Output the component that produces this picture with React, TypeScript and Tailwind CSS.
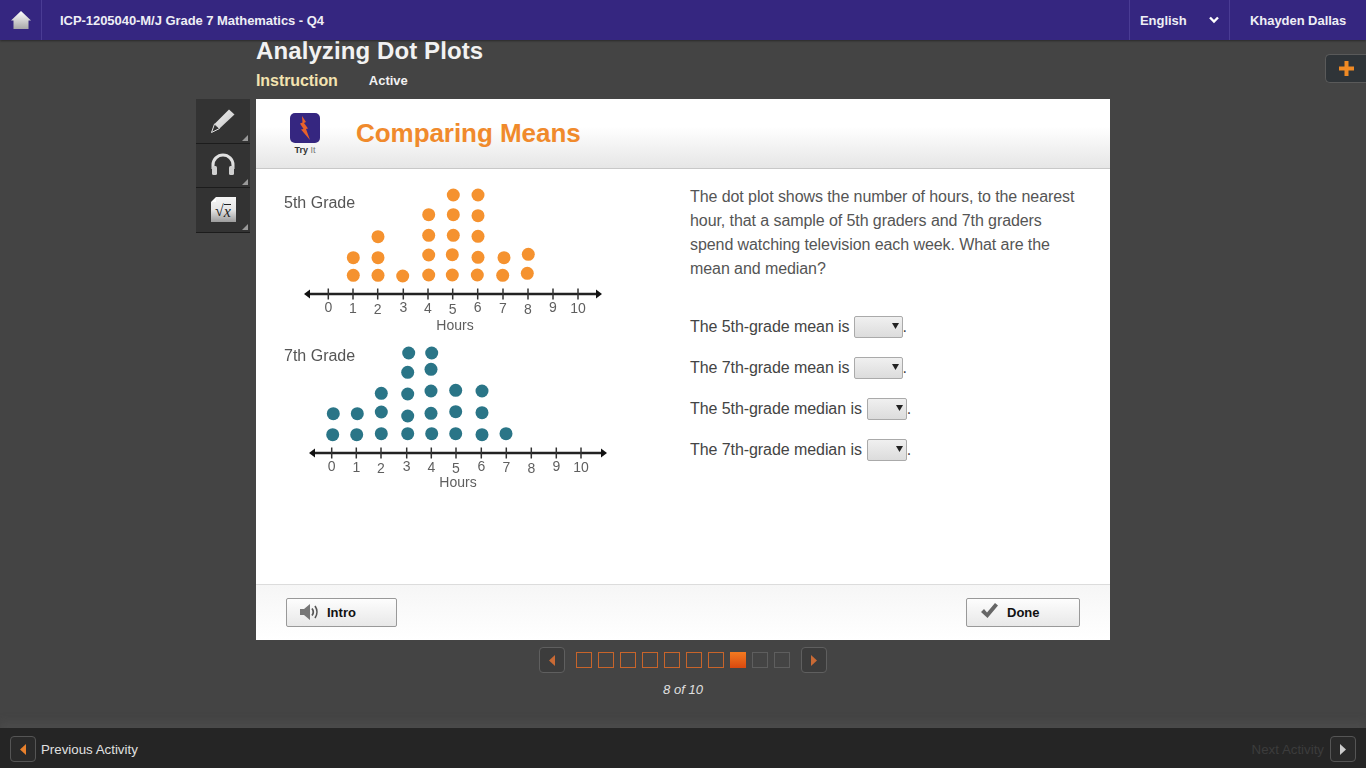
import React from "react";

const Q = ({ label, wide }: { label: string; wide?: boolean }) => (
  <div className="flex items-center h-[41px] text-[16px] tracking-[-0.07px] text-[#444]">
    <span>{label}</span>
    <div className={`relative h-[22px] rounded-[2px] border border-[#aaa] bg-gradient-to-b from-[#f0f0f0] to-[#dcdcdc] ${wide ? "w-[40px] ml-[5px]" : "w-[49px] ml-[4px]"}`}>
      <svg className="absolute right-[3px] top-[6px]" width="7" height="6" viewBox="0 0 7 6"><path d="M0 0h7L3.5 6z" fill="#222" /></svg>
    </div>
    <span>.</span>
  </div>
);

function Plot({ dots, color, y, x0, ticks, labelY, hoursX, hoursY, labels, title, titleY, xEnd }: { dots: number[][]; color: string; y: number; x0: number; xEnd: number; ticks: number[]; labelY: number; hoursX: number; hoursY: number; labels: number[]; title: string; titleY: number }) {
  return (
    <g>
      <text x="284" y={titleY} fontSize="16" fill="#555" textAnchor="start" dominantBaseline="middle" fontFamily="Liberation Sans, Arial, sans-serif">{title}</text>
      {dots.map((d, i) => <circle key={i} cx={d[0]} cy={d[1]} r="6.5" fill={color} />)}
      <line x1={x0 + 3} x2={xEnd - 3} y1={y} y2={y} stroke="#222" strokeWidth="2.4" />
      <path d={`M${x0} ${y}l6 -4.5v9z`} fill="#111" />
      <path d={`M${xEnd} ${y}l-6 -4.5v9z`} fill="#111" />
      {ticks.map((t, i) => (
        <g key={i}>
          <line x1={t} x2={t} y1={y - 5.5} y2={y + 5.5} stroke="#333" strokeWidth="1.5" />
          <text x={t} y={labelY + (i * 7 % 3 - 1)} fontSize="14" fill="#5f5f5f" textAnchor="middle" dominantBaseline="middle" fontFamily="Liberation Sans, Arial, sans-serif">{labels[i]}</text>
        </g>
      ))}
      <text x={hoursX} y={hoursY} fontSize="14" fill="#5f5f5f" textAnchor="middle" dominantBaseline="middle" fontFamily="Liberation Sans, Arial, sans-serif">Hours</text>
    </g>
  );
}

const d5 = [[353.3,257.7],[353.3,275.3],[378,236.7],[378,257.7],[378,275.3],[402.7,276],[428.7,214.7],[428.7,235.3],[428.7,255],[428.7,275],[453.3,195],[453.3,214.7],[453.3,235.3],[452.3,254.7],[452.3,275],[478,195],[478,215.7],[478,236.3],[478,257.3],[477.3,275],[504,257.7],[502.7,275.3],[528.3,254.3],[527.3,273.3]];
const d7 = [[333.3,413.7],[332.7,434.7],[357.3,413.7],[356.7,434.7],[381.3,393.3],[381.3,412],[381.3,433.7],[408.7,353],[407.7,372.3],[407.7,394],[407.7,416],[407.7,433.7],[431.7,353],[431,369.3],[431,391],[431,413.3],[431.7,433.7],[455.7,390.3],[455.7,411.7],[455.7,433.7],[482,391],[482,412.7],[482,434.7],[506,433.7]];
const nums = [0,1,2,3,4,5,6,7,8,9,10];

const Corner = () => <span className="absolute right-[2px] bottom-[2px] w-0 h-0 border-l-[6px] border-l-transparent border-b-[6px] border-b-[#999]" />;

const Tool = ({ children }: { children: React.ReactNode }) => (
  <div className="relative h-[44.500px] w-[54px] bg-[#333] border-b border-[#1c1c1c] flex items-center justify-center">
    {children}
    <Corner />
  </div>
);

const NavBtn = ({ dir, dark }: { dir: "l" | "r"; dark?: boolean }) => (
  <div className={`w-[26px] h-[26px] rounded-[4px] border ${dark ? "bg-[#2a2a2a] border-[#555]" : "bg-[#3c3c3c] border-[#5f5f5f]"} flex items-center justify-center`}>
    <svg width="6" height="11" viewBox="0 0 6 11"><path d={dir === "l" ? "M6 0v11L0 5.5z" : "M0 0v11l6-5.5z"} fill={dark ? "#e8802c" : "#c96a35"} /></svg>
  </div>
);

export default function App() {
  return (
    <div className="w-[1366px] h-[768px] overflow-hidden bg-[#444] flex flex-col relative" style={{ fontFamily: '"Liberation Sans", Arial, sans-serif' }}>
      <header className="h-[40px] bg-[#352680] flex items-center text-[13px] font-bold tracking-[-0.05px] text-[#eeeef5] shadow-[0_1px_2px_rgba(0,0,0,0.4)] z-10">
        <div className="w-[42px] h-full border-r border-[#4a3c94] flex items-center justify-center">
          <svg width="20" height="20" viewBox="0 0 20 20">
            <defs><linearGradient id="h" x1="0" y1="0" x2="0" y2="1"><stop offset="0" stopColor="#fff" /><stop offset="1" stopColor="#a8a8a8" /></linearGradient></defs>
            <path d="M10 1L20 10.5h-2.5V19h-15v-8.5H0z" fill="url(#h)" />
          </svg>
        </div>
        <div className="ml-[18px] flex-1 mt-[1px]">ICP-1205040-M/J Grade 7 Mathematics - Q4</div>
        <div className="w-[101px] h-full border-l border-r border-[#4a3c94] flex items-center justify-between pl-[10px] pr-[10px]">
          <span className="mt-[1px]">English</span>
          <svg width="10" height="8" viewBox="0 0 10 8"><path d="M1 1.5l4 4 4-4" fill="none" stroke="#fff" strokeWidth="2.4" /></svg>
        </div>
        <div className="w-[136px] pl-[20px] whitespace-nowrap mt-[1px]">Khayden Dallas</div>
      </header>

      <div className="absolute right-0 top-[54px] w-[41px] h-[29px] rounded-l-[5px] bg-[#2f3438] border border-r-0 border-[#5a5a5a] flex items-center justify-center z-10">
        <svg width="15" height="15" viewBox="0 0 15 15"><path d="M5.5 0h4v5.5H15v4H9.5V15h-4V9.5H0v-4h5.5z" fill="#f08a24" /></svg>
      </div>

      <main className="flex-1 flex flex-col pl-[256px]">
        <h1 className="text-[24px] leading-[24px] mt-[-1px] font-bold tracking-[0.1px] text-[#f2f2f2]">Analyzing Dot Plots</h1>
        <div className="flex items-center h-[24px] mt-[6px] mb-[6px]">
          <span className="text-[16px] font-bold tracking-[-0.08px] text-[#f3e3b0]">Instruction</span>
          <span className="text-[13px] font-bold text-[#f2f2f2] ml-[31px]">Active</span>
        </div>

        <div className="relative">
          <div className="absolute left-[-60px] top-0 flex flex-col">
            <Tool>
              <svg width="26" height="26" viewBox="0 0 26 26">
                <defs><linearGradient id="p" x1="0" y1="0" x2="1" y2="1"><stop offset="0" stopColor="#f8f8f8" /><stop offset="1" stopColor="#bcbcbc" /></linearGradient></defs>
                <path d="M19 1.5l5.5 5L9.5 20.5 1.5 24.500l3-8.500z" fill="url(#p)" />
                <path d="M4.500 16l5 4.500-8 4z" fill="#333" stroke="#ddd" strokeWidth="1" />
              </svg>
            </Tool>
            <Tool>
              <svg width="28" height="24" viewBox="0 0 28 24">
                <path d="M4 16V12a10 10 0 0 1 20 0v4" fill="none" stroke="#e0e0e0" strokeWidth="3" />
                <rect x="3" y="13" width="5" height="9" rx="1.500" fill="#d0d0d0" />
                <rect x="20" y="13" width="5" height="9" rx="1.500" fill="#d0d0d0" />
              </svg>
            </Tool>
            <Tool>
              <div className="relative w-[25px] h-[25px] bg-gradient-to-b from-[#f6f6f6] via-[#e6e6e6] to-[#9c9c9c] flex items-center justify-center text-[16px] leading-[16px] text-[#222]" style={{ fontFamily: '"Liberation Serif", serif' }}>
                <span className="absolute left-0 top-0 w-[5px] h-[5px] bg-[#333]" />
                <span className="absolute left-0 top-0 w-0 h-0 border-l-[5px] border-l-transparent border-b-[5px] border-b-white" />
                <span className="mt-[2px]">√</span>
                <span className="italic mt-[2px] border-t border-[#222] leading-[13px]">x</span>
              </div>
            </Tool>
          </div>

          <div className="w-[854px] h-[541px] bg-white flex flex-col">
            <div className="h-[70px] shrink-0 bg-gradient-to-b from-white from-40% to-[#e6e6e6] border-b border-[#c8c8c8] flex items-center">
              <div className="w-[100px] flex flex-col items-center pt-[2px] pr-[2px]">
                <div className="w-[30px] h-[30px] rounded-[5px] bg-[#352680] flex items-center justify-center">
                  <svg width="10" height="24" viewBox="0 0 10 24"><path d="M2 0l4 6-2 1 4 5.500-2 .5 4 11L1 13.500l2.500-.5L0 7.500 2.500 6.500z" fill="#e8622a" /></svg>
                </div>
                <div className="text-[9px] leading-[12px] mt-[1px] text-[#777]"><span className="font-bold text-[#333]">Try</span> It</div>
              </div>
              <h2 className="text-[26px] font-bold tracking-[-0.05px] text-[#f08a2c]">Comparing Means</h2>
            </div>

            <div className="flex-1 flex">
              <div className="w-[360px] shrink-0 relative blur-[0.3px]">
                <svg width="360" height="340" viewBox="256 169 360 340" className="block">
                  <Plot dots={d5} color="#f5922f" y={294} x0={304} xEnd={602} ticks={[328.3,353,377.7,403.3,428,452.7,477.7,503,528,553,578]} labelY={309.5} hoursX={455} hoursY={326} labels={nums} title="5th Grade" titleY={204} />
                  <Plot dots={d7} color="#2a7587" y={453} x0={309} xEnd={607} ticks={[331.7,356.3,381,406.7,431.3,456,481.3,506.3,531.3,556.3,581]} labelY={468.5} hoursX={458} hoursY={483.5} labels={nums} title="7th Grade" titleY={357} />
                </svg>
              </div>
              <div className="ml-[74px] pt-[16px] w-[396px]">
                <p className="text-[16px] leading-[24px] tracking-[-0.08px] text-[#555]">The dot plot shows the number of hours, to the nearest hour, that a sample of 5th graders and 7th graders spend watching television each week. What are the mean and median?</p>
                <div className="mt-[25px]">
                  <Q label="The 5th-grade mean is" />
                  <Q label="The 7th-grade mean is" />
                  <Q label="The 5th-grade median is" wide />
                  <Q label="The 7th-grade median is" wide />
                </div>
              </div>
            </div>

            <div className="h-[56px] shrink-0 border-t border-[#dcdcdc] bg-gradient-to-b from-[#f6f6f6] to-white flex items-center justify-between pl-[30px] pr-[30px]">
              <div className="w-[111px] h-[29px] rounded-[2px] border border-[#999] bg-gradient-to-b from-[#fdfdfd] to-[#e8e8e8] flex items-center pl-[12px] text-[13px] font-bold text-[#111] mb-[1px]">
                <svg width="20" height="20" viewBox="0 0 20 20" className="mr-[8px]">
                  <path d="M1 7h4l6-5v16l-6-5H1z" fill="#777" />
                  <path d="M13 6.500c1.500 2 1.500 5 0 7M16 4c2.500 3.500 2.500 8.500 0 12" fill="none" stroke="#555" strokeWidth="1.700" />
                </svg>
                <span className="mt-[2px]">Intro</span>
              </div>
              <div className="w-[114px] h-[29px] rounded-[2px] border border-[#999] bg-gradient-to-b from-[#fdfdfd] to-[#e8e8e8] flex items-center pl-[13px] text-[13px] font-bold text-[#111] mb-[1px]">
                <svg width="19" height="16" viewBox="0 0 19 16" className="mr-[8px] mb-[2px]">
                  <path d="M1 9l3-3 3 3.500L15 0l3 2.500L7.500 15z" fill="#666" />
                </svg>
                <span className="mt-[2px]">Done</span>
              </div>
            </div>
          </div>
        </div>

        <div className="w-[854px] flex justify-center items-center mt-[7px] h-[26px]">
          <NavBtn dir="l" />
          <div className="flex gap-[6px] mx-[11px]">
            {[1,2,3,4,5,6,7,8,9,10].map((n) => (
              <div key={n} className={n < 8 ? "w-[16px] h-[16px] border border-[#c8642a]" : n === 8 ? "w-[16px] h-[16px] bg-gradient-to-b from-[#f47a20] to-[#d9480f]" : "w-[16px] h-[16px] border border-[#5e5e5e]"} />
            ))}
          </div>
          <NavBtn dir="r" />
        </div>
        <div className="w-[854px] text-center text-[13px] italic text-[#e0e0e0] mt-[9px] leading-[16px]">8 of 10</div>
      </main>

      <footer className="h-[40px] bg-[#252525] shadow-[0_-6px_8px_rgba(90,90,90,0.35)] flex items-center justify-between px-[10px] pt-[2px] text-[13.300px]">
        <div className="flex items-center">
          <NavBtn dir="l" dark />
          <span className="ml-[5px] text-[#e0e0e0] mt-[1px]">Previous Activity</span>
        </div>
        <div className="flex items-center">
          <span className="mr-[6px] text-[#3c3c3c] mt-[1px]">Next Activity</span>
          <div className="w-[26px] h-[26px] rounded-[4px] border border-[#555] bg-[#2a2a2a] flex items-center justify-center">
            <svg width="6" height="11" viewBox="0 0 6 11"><path d="M0 0v11l6-5.500z" fill="#ccc" /></svg>
          </div>
        </div>
      </footer>
    </div>
  );
}
